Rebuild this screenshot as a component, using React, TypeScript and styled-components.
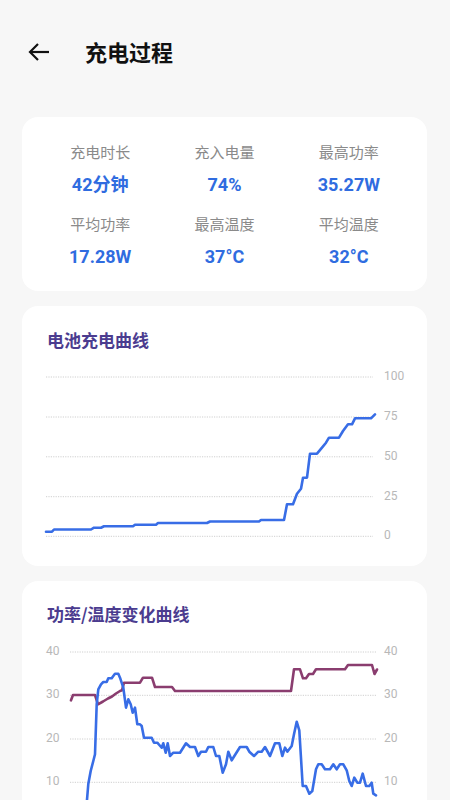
import React from "react"
import styled, { createGlobalStyle } from "styled-components"

const GlobalStyle = createGlobalStyle`
	body {
		margin: 0;
		background: #f7f7f7;
		font-family: Roboto, "Noto Sans CJK SC", sans-serif;
	}
`

const Page = styled.div`
	width: 450px;
	height: 800px;
	background: #f7f7f7;
	overflow: hidden;
`

const Header = styled.header`
	height: 104px;
	display: flex;
	align-items: center;
	padding-left: 27px;
	gap: 34px;
`

const BackButton = styled.button`
	border: none;
	background: none;
	padding: 0;
	width: 24px;
	height: 24px;
	display: flex;
	color: #111;
`

const Title = styled.h1`
	margin: 0 0 3px;
	font-size: 22px;
	font-weight: 700;
	color: #111;
	font-family: "Noto Sans CJK SC", sans-serif;
	line-height: 28px;
`

const Main = styled.main`
	display: flex;
	flex-direction: column;
	gap: 15px;
	padding: 13px 23px 0 22px;
`

const Card = styled.section<{ $pad: string }>`
	background: #fff;
	border-radius: 16px;
	padding: ${props => props.$pad};
`

const StatGrid = styled.div`
	display: grid;
	grid-template-columns: repeat(3, 1fr);
	row-gap: 17px;
`

const Stat = styled.div`
	display: flex;
	flex-direction: column;
	align-items: center;
	gap: 11px;
`

const StatLabel = styled.span`
	font-size: 15px;
	line-height: 20px;
	color: #8a8a8a;
	font-family: "Noto Sans CJK SC", sans-serif;
`

const StatValue = styled.span`
	font-size: 18px;
	line-height: 24px;
	font-weight: 700;
	color: #2f6ce0;
`

const SectionTitle = styled.h2`
	margin: 0 0 4px 25px;
	font-size: 17px;
	line-height: 24px;
	font-weight: 700;
	color: #4b3c8f;
	font-family: "Noto Sans CJK SC", sans-serif;
`

const Chart = styled.svg`
	display: block;
	width: 100%;
`

const AxisText = styled.text`
	font-size: 12px;
	fill: #b8b8b8;
	font-family: Roboto, sans-serif;
	dominant-baseline: middle;
`

const BLUE = "#386de6"
const PURPLE = "#8a3d6f"

const stats = [
	["充电时长", "42分钟"],
	["充入电量", "74%"],
	["最高功率", "35.27W"],
	["平均功率", "17.28W"],
	["最高温度", "37°C"],
	["平均温度", "32°C"],
]

const battery = [
	[46, 530.7], [52, 530.7], [54, 528.5], [91, 528.5], [94, 526.7], [101, 526.7], [104, 525.3],
	[133, 525.3], [135, 523.7], [156, 523.7], [158, 522], [207, 522], [210, 520.5], [259, 520.5],
	[261, 519], [284, 519], [287, 503.3], [293, 503.3], [297, 492.7], [301, 487.7], [303, 476.7],
	[307, 476.7], [310, 452.7], [317, 452.7], [322, 446.7], [326, 441.7], [329, 436.7], [339, 436.7],
	[343, 430], [348, 423.3], [352, 423.3], [355, 417.3], [371, 417.3], [375, 413.3],
]

const temperature = [
	[71, 699.3], [73, 694], [95, 694], [98, 703.3], [103, 700.5], [108, 697.5], [112, 695.5],
	[116, 692.5], [120, 690], [122, 689.3], [124, 681.7], [140, 681.7], [143, 676.7], [152, 676.7],
	[155, 686], [172, 686], [175, 690], [291, 690], [294, 668.3], [300, 668.3], [303, 677.3],
	[306, 677.3], [309, 673], [313, 673], [316, 668.3], [345, 668.3], [348, 664], [372, 664],
	[374.5, 673], [377, 668.5],
]

const power = [
	[86.5, 805], [88.3, 783], [90.7, 770], [93.3, 760], [95, 753.3], [96.7, 703.3], [98.3, 688.3],
	[101, 683.3], [103.3, 681], [106.7, 681], [108.3, 677.3], [111.7, 677.3], [113.3, 675], [115, 672.7],
	[118.3, 672.7], [120, 676.7], [123.3, 686.7], [126, 706.7], [128.3, 698.3], [130.7, 703.3],
	[132.7, 711.7], [135, 706.7], [137.3, 723.3], [140, 723.3], [141.7, 725], [144, 736.7],
	[151.7, 736.7], [154, 741.7], [157.3, 741.7], [159.3, 744], [161.7, 746.7], [163.3, 742.3],
	[165.7, 751.7], [167.7, 742.3], [170, 755], [173.3, 751.7], [180, 751.7], [186, 742.3],
	[190, 746], [195, 746], [198.3, 755], [201, 750.7], [206, 750.7], [208.3, 746], [213.3, 746],
	[216, 755], [219.3, 755], [222.7, 771.7], [226, 763.3], [228.3, 750.7], [231.7, 759.3],
	[240, 746], [246.7, 746], [249.3, 750.7], [254, 755], [258.3, 750.7], [261.7, 750.7], [265, 746],
	[270, 755], [275, 742.3], [279.3, 742.3], [282.3, 755], [285, 746.7], [287.3, 750.7],
	[291.7, 745], [294, 733.3], [296.7, 720.7], [299.3, 729.3], [302.7, 785], [306, 785],
	[309.3, 792.7], [312.3, 790], [316, 768.3], [318.3, 763.3], [321.7, 763.3], [325, 768.3],
	[330, 768.3], [333.3, 763.3], [336.7, 768.3], [340, 763.3], [343.3, 763.3], [346.7, 769.3],
	[349.3, 780], [351.7, 785], [354.3, 776.7], [357.3, 781.7], [360, 781.7], [362.7, 772.7],
	[366, 785], [369.3, 785], [371.7, 781.7], [373.3, 792.7], [376, 794.3],
]

const toPoints = (pts: number[][]) => pts.map(p => p.join(",")).join(" ")

const Grid = ({ x1, x2, y }: { x1: number; x2: number; y: number }) => (
	<line x1={x1} x2={x2} y1={y} y2={y} stroke="#cfcfcf" strokeWidth={1} strokeDasharray="1.2 1.2" />
)

const BatteryChart = () => {
	const ticks = [[100, 376], [75, 416], [50, 455.8], [25, 495.7], [0, 535.3]]
	return (
		<Chart viewBox="22 355 405 200" height={200}>
			{ticks.map(([v, y]) => (
				<g key={v}>
					<Grid x1={46} x2={373} y={y} />
					<AxisText x={384} y={y}>{v}</AxisText>
				</g>
			))}
			<polyline points={toPoints(battery)} fill="none" stroke={BLUE} strokeWidth={2.6} strokeLinejoin="round" strokeLinecap="round" />
		</Chart>
	)
}

const PowerChart = () => {
	const ticks = [[40, 651], [30, 694.3], [20, 738], [10, 781.3]]
	return (
		<Chart viewBox="22 629 405 220" height={220}>
			<Grid x1={70} x2={377} y={824.7} />
			{ticks.map(([v, y]) => (
				<g key={v}>
					<Grid x1={70} x2={377} y={y} />
					<AxisText x={46} y={y}>{v}</AxisText>
					<AxisText x={384} y={y}>{v}</AxisText>
				</g>
			))}
			<polyline points={toPoints(temperature)} fill="none" stroke={PURPLE} strokeWidth={2.6} strokeLinejoin="round" strokeLinecap="round" />
			<polyline points={toPoints(power)} fill="none" stroke={BLUE} strokeWidth={2.6} strokeLinejoin="round" strokeLinecap="round" />
		</Chart>
	)
}

const App = (): JSX.Element => (
	<Page>
		<GlobalStyle />
		<Header>
			<BackButton aria-label="返回">
				<svg width="24" height="24" viewBox="0 0 24 24" fill="none" stroke="currentColor" strokeWidth={2.2}>
					<path d="M22 12H3" />
					<path d="M11 4l-8 8 8 8" />
				</svg>
			</BackButton>
			<Title>充电过程</Title>
		</Header>
		<Main>
			<Card $pad="25px 16px 22px">
				<StatGrid>
					{stats.map(([label, value]) => (
						<Stat key={label}>
							<StatLabel>{label}</StatLabel>
							<StatValue>{value}</StatValue>
						</Stat>
					))}
				</StatGrid>
			</Card>
			<Card $pad="22px 0 10px">
				<SectionTitle>电池充电曲线</SectionTitle>
				<BatteryChart />
			</Card>
			<Card $pad="21px 0 10px">
				<SectionTitle>功率/温度变化曲线</SectionTitle>
				<PowerChart />
			</Card>
		</Main>
	</Page>
)

export default App
